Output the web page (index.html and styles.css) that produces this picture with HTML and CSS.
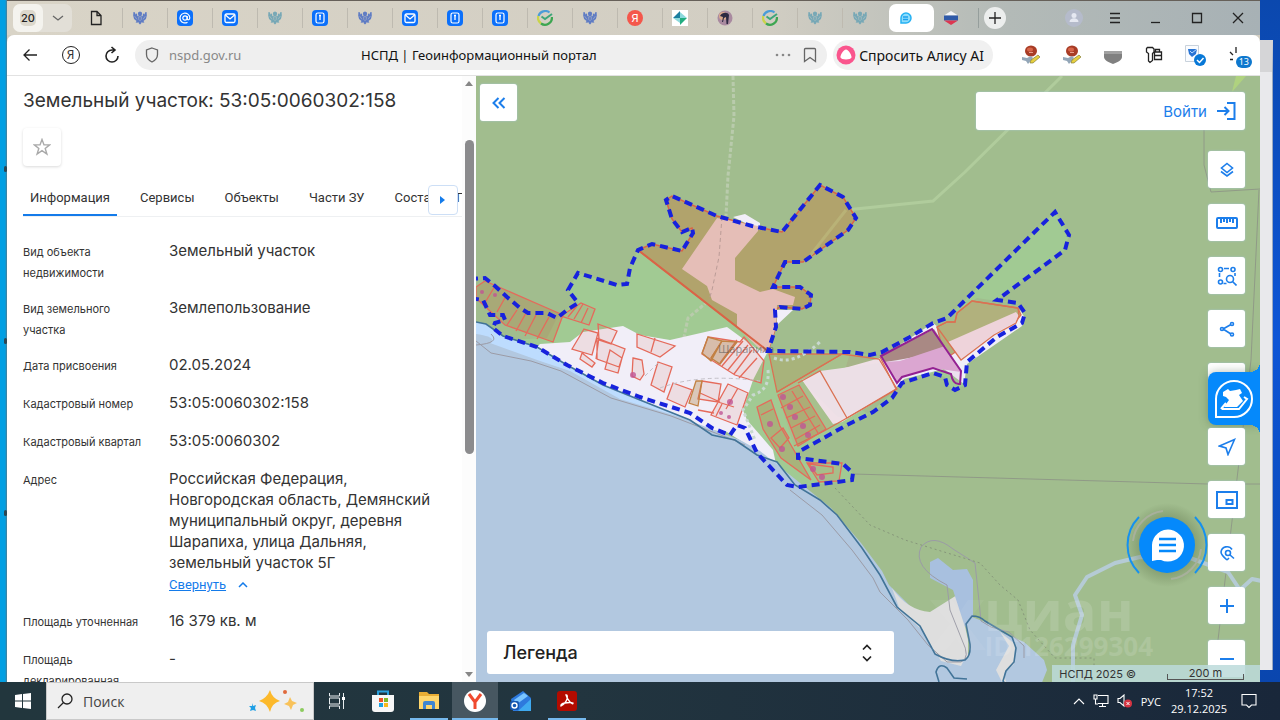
FILE: index.html
```html
<!DOCTYPE html>
<html lang="ru">

<head>
    <meta charset="UTF-8">
    <meta name="viewport" content="width=device-width, initial-scale=1.0">
    <title>НСПД | Геоинформационный портал</title>
    <link rel="stylesheet" href="styles.css">
</head>

<body>
    <!-- shared icons -->
    <svg class="sprite" aria-hidden="true">
        <symbol id="eagle" viewBox="0 0 16 16">
            <path fill="currentColor" d="M6 1.500l2-1 2 1 .5 2-1 1.500 1.500 1 .5-3.500L13 4l1-2.500L15.500 1l.3 4-1 4-2.800 2.500 1 1.500-2 .5-1-.8-.8 1.500L8 15.500l-1.200-1.300L6 12.700l-1 .8L3 13l1-1.500L1.200 9l-1-4 .3-4L2 1.500 3 4l1.500-1.500L5 6l1.500-1-1-1.500z" />
            <path stroke="#d5d1c6" stroke-width=".5" fill="none" d="M2 6l2.500 3.500M14 6l-2.500 3.500M6.500 6.500h3v3L8 11 6.500 9.500z" />
        </symbol>
        <symbol id="mail" viewBox="0 0 16 16">
            <rect width="16" height="16" rx="4" fill="#0b70fb" />
            <rect x="3" y="4" width="10" height="8.500" rx="1.500" fill="none" stroke="#fff" stroke-width="1.300" />
            <path d="M3.500 5l4.500 4 4.500-4" fill="none" stroke="#fff" stroke-width="1.300" />
        </symbol>
        <symbol id="mailat" viewBox="0 0 16 16">
            <rect width="16" height="16" rx="4" fill="#0b70fb" />
            <circle cx="8" cy="8" r="2.200" fill="none" stroke="#fff" stroke-width="1.200" />
            <path d="M10.200 6v2.600c0 1.800 2.600 1.600 2.600-.8A4.900 4.900 0 1 0 10.500 12.200" fill="none" stroke="#fff" stroke-width="1.200" />
        </symbol>
        <symbol id="card" viewBox="0 0 16 16">
            <rect width="16" height="16" rx="4" fill="#0b70fb" />
            <rect x="4" y="3" width="8" height="10" rx="1.800" fill="none" stroke="#fff" stroke-width="1.200" />
            <path d="M7 5.500h2M8 5.500v4.500" stroke="#fff" stroke-width="1.300" />
        </symbol>
        <symbol id="sber" viewBox="0 0 16 16">
            <path d="M12.500 2.500A7 7 0 0 0 1.500 6" fill="none" stroke="#4a9cd8" stroke-width="2.200" />
            <path d="M1.300 6A7 7 0 0 0 4 13.500" fill="none" stroke="#c9d44a" stroke-width="2.200" />
            <path d="M4 13.500A7 7 0 0 0 14.900 7" fill="none" stroke="#3da651" stroke-width="2.200" />
            <path d="M4.500 6.500L8 9l7-5" fill="none" stroke="#3da67a" stroke-width="2" />
        </symbol>
        <symbol id="tools" viewBox="0 0 20 20">
            <ellipse cx="10" cy="6" rx="6" ry="5.500" fill="#a83c25" />
            <ellipse cx="9" cy="4.500" rx="3" ry="2" fill="#d8654a" />
            <path d="M8 7h4v1H8z" fill="#e8a08c" />
            <path d="M1 12l5 1 4-2 2 2-5 6-2-3-4-1z" fill="#93a6b8" />
            <path d="M9 18l1-3 7-5 2 2-7 6z" fill="#e6cf3f" stroke="#76702c" stroke-width=".6" />
        </symbol>
    </svg>

    <div class="desktop">
        <div class="desktop-left">
            <span></span><span></span><span></span>
        </div>

        <div class="browser">
            <!-- tab strip -->
            <header class="tabbar">
                <div class="tab-group">
                    <button class="tab-count"><span>20</span></button>
                    <button class="tab-more" aria-label="Список вкладок">
                        <svg width="12" height="12" viewBox="0 0 12 12"><path d="M1 4l5 4 5-4" class="line grey" /></svg>
                    </button>
                </div>
                <button class="doc-tab" aria-label="Документ">
                    <svg width="12" height="16" viewBox="0 0 12 16"><path d="M1.500 1.500h5.500l4 4v9h-9.500zM7 1.500v4h4" class="line" /></svg>
                </button>
                <nav class="tabs" aria-label="Вкладки">
                    <button class="tab eagle-blue"><svg><use href="#eagle" /></svg></button>
                    <button class="tab"><svg><use href="#mailat" /></svg></button>
                    <button class="tab"><svg><use href="#mail" /></svg></button>
                    <button class="tab eagle-teal"><svg><use href="#eagle" /></svg></button>
                    <button class="tab"><svg><use href="#card" /></svg></button>
                    <button class="tab eagle-blue"><svg><use href="#eagle" /></svg></button>
                    <button class="tab"><svg><use href="#mail" /></svg></button>
                    <button class="tab"><svg><use href="#card" /></svg></button>
                    <button class="tab"><svg><use href="#card" /></svg></button>
                    <button class="tab"><svg><use href="#sber" /></svg></button>
                    <button class="tab eagle-blue"><svg><use href="#eagle" /></svg></button>
                    <button class="tab"><span class="ya">Я</span></button>
                    <button class="tab">
                        <svg viewBox="0 0 16 16"><rect width="16" height="16" fill="#fff" /><path d="M8 1v7H1z" fill="#1c7fa0" /><path d="M1 8h7v5z" fill="#8bd9dc" /><path d="M8 2l7 6H8z" fill="#8bd9dc" /><path d="M8 8h7l-7 7z" fill="#22ad80" /></svg>
                    </button>
                    <button class="tab">
                        <svg viewBox="0 0 16 16"><circle cx="8" cy="8" r="7.500" fill="#a98aa0" /><circle cx="6" cy="6" r="4" fill="#dba98d" /><path d="M3 6c2-4 8-4 9-1l-1 9H9.500L9 7 7 8l-1 4H5l1-5z" fill="#2d2942" /></svg>
                    </button>
                    <button class="tab"><svg><use href="#sber" /></svg></button>
                    <button class="tab eagle-teal"><svg><use href="#eagle" /></svg></button>
                    <button class="tab eagle-teal"><svg><use href="#eagle" /></svg></button>
                </nav>
                <button class="tab active" aria-label="НСПД">
                    <svg viewBox="0 0 16 16"><path d="M3 13V8a5 5 0 1 1 5 5z" fill="#8edcfb" stroke="#25b1f3" stroke-width="1.500" /><path d="M5 7h5M5 9.500h5" stroke="#1ba1ef" stroke-width="1.500" /></svg>
                </button>
                <button class="tab flag-tab" aria-label="Госуслуги">
                    <svg viewBox="0 0 16 16"><path d="M1 5.500L8 1l7 4.500z" fill="#f5f6f8" /><path d="M1 5.500h14v5H1z" fill="#2f5aa8" /><path d="M1 10.500h14L8 15z" fill="#dd3650" /></svg>
                </button>
                <button class="new-tab" aria-label="Новая вкладка">
                    <svg width="12" height="12" viewBox="0 0 12 12"><path d="M6 0v12M0 6h12" class="line" /></svg>
                </button>
                <div class="window-buttons">
                    <button aria-label="Профиль">
                        <svg width="18" height="18" viewBox="0 0 18 18"><circle cx="9" cy="9" r="9" fill="#b5bbcb" /><circle cx="9" cy="6.500" r="2.500" fill="#e5e8f1" /><path d="M4.500 13c0-5 9-5 9 0z" fill="#e5e8f1" /></svg>
                    </button>
                    <button aria-label="Меню"><svg width="12" height="12" viewBox="0 0 12 12"><path d="M1 1.500h10M1 6h10M1 10.500h10" class="line" /></svg></button>
                    <button aria-label="Свернуть"><svg width="12" height="12" viewBox="0 0 12 12"><path d="M1 10.500h9" class="line" /></svg></button>
                    <button aria-label="Развернуть"><svg width="12" height="12" viewBox="0 0 12 12"><path d="M1.500 1.500h9v9h-9z" class="line" /></svg></button>
                    <button aria-label="Закрыть"><svg width="12" height="12" viewBox="0 0 12 12"><path d="M1 1l10 10M11 1L1 11" class="line" /></svg></button>
                </div>
            </header>

            <!-- address bar -->
            <div class="toolbar">
                <button class="nav-btn" aria-label="Назад"><svg width="16" height="16" viewBox="0 0 16 16"><path d="M15 8H2M7.500 2.500L2 8l5.500 5.500" class="line" /></svg></button>
                <button class="nav-btn" aria-label="Яндекс"><span class="ya-ring">Я</span></button>
                <button class="nav-btn" aria-label="Обновить"><svg width="16" height="18" viewBox="0 0 16 18"><path d="M10.500 4H8a6 6 0 1 0 6 6M7.500 1l3.500 3-3.500 3" class="line thick" /></svg></button>
                <div class="address">
                    <svg width="14" height="16" viewBox="0 0 14 16"><path d="M7 1l5.500 2v4.500c0 3.500-2.500 6-5.500 7.500-3-1.500-5.500-4-5.500-7.500V3z" class="line grey" /></svg>
                    <input class="url" type="text" value="nspd.gov.ru" aria-label="Адрес">
                    <span class="page-title">НСПД | Геоинформационный портал</span>
                    <button class="more" aria-label="Ещё">
                        <svg width="16" height="4" viewBox="0 0 16 4"><g fill="#888"><circle cx="2" cy="2" r="1.300" /><circle cx="8" cy="2" r="1.300" /><circle cx="14" cy="2" r="1.300" /></g></svg>
                    </button>
                    <button aria-label="В закладки">
                        <svg width="14" height="16" viewBox="0 0 14 16"><path d="M1.500 2.500a1 1 0 0 1 1-1h9a1 1 0 0 1 1 1v12L7 10.500l-5.500 4z" class="line grey" /></svg>
                    </button>
                </div>
                <button class="alice">
                    <svg width="20" height="20" viewBox="0 0 20 20"><circle cx="10" cy="10" r="9.500" fill="#fa558d" /><path d="M10 4.500c2.500 0 6 6 5.500 8-.5 2.500-10.500 2.500-11 0C4 10.500 7.500 4.500 10 4.500z" fill="#fff" /></svg>
                    Спросить Алису AI
                </button>
                <div class="extensions">
                    <button aria-label="Расширение"><svg width="20" height="20"><use href="#tools" /></svg></button>
                    <button aria-label="Расширение"><svg width="20" height="20"><use href="#tools" /></svg></button>
                    <button aria-label="Щит"><svg width="20" height="20" viewBox="0 0 20 20"><path d="M1 6h18v3H1z" fill="#a1a1a1" /><path d="M1 9h18v3c0 3-4 5-9 7-5-2-9-4-9-7z" fill="#808080" /></svg></button>
                    <button aria-label="Пароли"><svg width="18" height="18" viewBox="0 0 18 18"><path d="M1.500 2.500l1-1h5l1.500 1.500v3L7.500 7.500v7L5 16.500 3.500 15V7.500l-2-1.500zM10.500 6V3.500h4V6M9.500 6h7v7.500h-7zM9.500 9.500h7" class="line" /></svg></button>
                    <button aria-label="Подпись"><svg width="22" height="22" viewBox="0 0 22 22"><path d="M1.500 1.500h13v16h-13z" fill="#fafcff" stroke="#c9d2dc" /><path d="M4 5h9l-1 5-4 3-3-3z" fill="#2874d4" /><path d="M6 7l2 2 5-4" stroke="#b9daff" fill="none" /><circle cx="16" cy="16" r="6" fill="#0878d7" /><path d="M13 16l2.500 2.500L19.500 14" fill="none" stroke="#fff" stroke-width="1.500" /></svg></button>
                    <button class="downloads" aria-label="Загрузки">
                        <svg width="18" height="18" viewBox="0 0 18 18"><path d="M9 1v6M3 6l3 3M3 13.500h3" class="line" /></svg>
                        <span class="badge">13</span>
                    </button>
                </div>
            </div>

            <main class="portal">
                <!-- land parcel card -->
                <section class="panel">
                    <div class="panel-body">
                        <h1>Земельный участок: 53:05:0060302:158</h1>
                        <button class="favorite" aria-label="В избранное">
                            <svg width="18" height="18" viewBox="0 0 18 18"><path d="M9 1.500l2 5.400h5.700l-4.500 3.500 1.700 5.700L9 12.700l-4.900 3.400 1.700-5.700L1.300 6.900H7z" fill="none" stroke="#a9a9a9" stroke-width="1.400" /></svg>
                        </button>
                        <div class="info-tabs" role="tablist">
                            <button class="info-tab selected" role="tab">Информация</button>
                            <button class="info-tab" role="tab">Сервисы</button>
                            <button class="info-tab" role="tab">Объекты</button>
                            <button class="info-tab" role="tab">Части ЗУ</button>
                            <button class="info-tab" role="tab">Состав ЕЗП</button>
                            <button class="tabs-next" aria-label="Далее">
                                <svg width="6" height="8" viewBox="0 0 6 8"><path d="M0 0l5 4-5 4z" fill="#147bea" /></svg>
                            </button>
                        </div>
                        <dl class="details">
                            <div><dt>Вид объекта недвижимости</dt><dd>Земельный участок</dd></div>
                            <div><dt>Вид земельного участка</dt><dd>Землепользование</dd></div>
                            <div><dt>Дата присвоения</dt><dd>02.05.2024</dd></div>
                            <div><dt>Кадастровый номер</dt><dd>53:05:0060302:158</dd></div>
                            <div><dt>Кадастровый квартал</dt><dd>53:05:0060302</dd></div>
                            <div>
                                <dt>Адрес</dt>
                                <dd>Российская Федерация, Новгородская область, Демянский муниципальный округ, деревня Шарапиха, улица Дальняя, земельный участок 5Г
                                    <a class="collapse" href="#"><span>Свернуть</span><svg width="10" height="6" viewBox="0 0 10 6"><path d="M1 5l4-4 4 4" fill="none" stroke="#147bea" stroke-width="1.500" /></svg></a>
                                </dd>
                            </div>
                            <div><dt>Площадь уточненная</dt><dd>16 379 кв. м</dd></div>
                            <div><dt>Площадь декларированная</dt><dd>-</dd></div>
                        </dl>
                    </div>
                    <div class="scrollbar">
                        <i class="arrow-up"></i>
                        <div class="track"><div class="thumb"></div></div>
                        <i class="arrow-down"></i>
                    </div>
                </section>

                <!-- map -->
                <section class="map">
                    <svg class="map-canvas" viewBox="476 76 784 606" preserveAspectRatio="xMinYMin slice">
                        <defs>
                            <path id="border" d="M470 279L485 278 495 286 507 297 520 308 528 313 547 313 557 318 567 310 578 303 568 290 578 273 617 285 627 284 630 268 638 250 652 244 682 251 693 233 692 228 682 232 672 219 666 200 672 196 717 216 752 226 782 232 820 185 843 197 856 218 848 230 803 262 785 262 773 287 800 287 811 295 810 305 802 309 780 307 775 310 776 327 768 351 850 352 870 355 882 352 910 337 933 323 947 318 1055 212 1069 235 1065 250 997 300 1018 303 1025 313 1022 323 997 337 967 362 965 385 955 390 947 385 945 377 933 373 902 383 892 398 873 412 847 425 820 440 798 452 798 458 843 464 853 473 852 480 798 487 787 485 757 453 745 428 737 425 730 435 712 428 690 413 640 397 603 383 567 365 537 347 503 336 493 328 495 323 505 320 503 315 490 315 483 300 470 298" />
                        </defs>
                        <rect x="476" y="76" width="900" height="700" fill="#a1bd8e" />
                        <use href="#border" fill="#a1ca93" />
                        <path fill="#a1bd8e" d="M476 278l9 0 10 8 25 22 8 5h19l10 5-10 20-40 2-20-8-6-12-5-20z" />
                        <path fill="#a1bd8e" d="M850 353l20 3 63-33 14-5 30-20 20 3 25 3 3 20-55 40-5 20-20-15-30 5-47 40-30-20z" />

                        <!-- roads and field tracks -->
                        <path d="M805 262L846 210 933 201 965 172 1062 76" fill="none" stroke="#b0cc9c" stroke-width="3" />
                        <path d="M1236 76h10l-14 16z" fill="#afd27f" />
                        <path d="M733 76l1 40-6 60-2 40M712 298l-24 20-5 24" fill="none" stroke="#b9cbac" stroke-width="3" stroke-dasharray="4 2" />

                        <!-- village -->
                        <path fill="#f1eef8" d="M540 344l30-2 13-10 40-6 17 9 30 5 57-13 30 22 10 4-14 27-10 30 4 10 26 30 3 14-24-16-25-16-40-5-60-30-70-22-30-18z" />
                        <path fill="#f1eef8" d="M802 380l78-22 53-35 27 22 60-35 5 8-3 8-55 38-3 20-20-15-40 10-12 13-50 30-9 2z" />

                        <!-- lake -->
                        <path fill="#b9d5f5" d="M476 322l10 2 17 12 34 11 30 18 36 20 37 15 50 20 22 15 23 5 22 15 20 7 18 23 25 15 17 15 25 33 18 27 17 32 23 19 15 28 20 7 15-4V700H476z" />
                        <path fill="#bddcfe" d="M476 322l10 2 17 12 34 11 30 18 36 20 37 15 50 20 22 15v6l-60-18-100-38-76-25z" />
                        <path fill="#b2c8e0" d="M476 334q22 3 14 9l50 18 30 10 50 28 60 18 60 23 20 11 40 32 31 25 30 35 21 28 7 14 28 28 20 25 19 17 12 4 18-5 20-20 18 8 20 18 3 10-10 25 8 20H476z" />
                        <path fill="#b2c8e0" d="M935 654l20 7 13-1 2-15-4-20 6-8 13 5 25 15 6 11-2 17-10 7 2 14H900z" />
                        <path fill="#dedede" d="M892 588q15 22 38 24l27-17 5 18 6 27 0 18q-15 5-32-4l-14-24-22-20z" />
                        <path fill="#a8c0df" d="M930 562l8-4 15 12 14-1 6 11v37l-8 10-12-37-23-12z" />
                        <path fill="#dedede" d="M1000 632l15 12-1 20-10 9 2 9h-4l-6-12 13-24zM938 656l25 6-2 4-20-5z" />
                        <g fill="none" stroke="#9b9ba6" stroke-width="1">
                            <path d="M476 345q25-2 15-11M476 341l15 12 40 8 30 10 50 27 60 18 60 23 14 6M790 490l32 25 30 35 21 28 7 14 28 28 20 25 19 17h14q10-4 1-22l-12-30-3-25q-35-18-26-38 12-14 32 2l22 14 4 38 2 20 10 6 18 5 15 14v12" />
                            <path d="M853 474l355 10h52M1204 130v35l7 27 49-3M1259 190l-8 170-33 280" stroke="#909a87" />
                            <path d="M835 488l35 37 35 15 75 23 20 22 18 15 12 30 25 28h39v8" stroke="#86967a" stroke-dasharray="2 3" />
                        </g>
                        <path d="M476 322l10 2 17 12 34 11 30 18 36 20 37 15 50 20 22 15 23 5 22 15 20 7 18 23 25 15 17 15 25 33 18 27 17 32 23 19 15 28q16 9 30 6 6-4 5-16l-4-20 6-8q8 0 13 5l27 16 4 11-2 14-8 9-3 10 6 8M939 682l-3-10q3-10 11-4l7 10 13 1" fill="none" stroke="#427498" stroke-width="1.600" />
                        <path d="M1073 682v-37l9-30-7-20 12-18 28-14 25-6 50 1 38 14 12 18 12-11 10 2" fill="none" stroke="#b5cbd5" stroke-width="4" stroke-linejoin="round" />

                        <!-- large parcel -->
                        <path fill="#b1a36c" stroke="#da6447" stroke-width="1.500" d="M638 250L652 244 682 251 693 233 692 228 682 232 672 219 666 200 672 196 717 216 752 226 782 232 820 185 843 197 856 218 848 230 803 262 785 262 773 287 800 287 811 295 810 305 802 309 780 307 775 310 776 327 768 351z" />
                        <path fill="#f1eef8" d="M733 217l12-3 15 9v7zM777 310h16l-16 15z" />
                        <path fill="#e5beb7" d="M717 218l41 8v5l-23 27v22l25 12 13-3 22 8-2 8-16 0-1 22-8 25-5 0-26-25v-13l-25-14-5-14-25-17z" />
                        <path d="M638 250l130 101" stroke="#da6447" stroke-width="2" />
                        <path d="M722 217l-3 40-7 33-3 10" fill="none" stroke="#bb9c97" stroke-dasharray="4 3" />
                        <path d="M805 262L846 210" stroke="#b9b277" stroke-width="3" />

                        <!-- eastern parcels -->
                        <g fill="rgba(222,110,90,.1)" stroke="#da7253" stroke-width="1.300">
                            <path d="M769 354h73l-65 38z" fill="rgba(190,110,50,.25)" />
                            <path d="M777 392l65-38 37 5 18 30-50 29-23 13-30 15M820 371l27 47" />
                            <path fill="#ecdfe6" stroke="none" d="M802 380l18-9 60-8 16 26-49 28-9 0z" />
                            <path d="M847 418l-27-47-22 12M880 357l16 32-49 29" fill="none" />
                            <path fill="#b1b17d" d="M937 327l10-5h8l2-9 15-12 46 7 3 7-4 5-51 25-21 14z" />
                            <path fill="#eed3da" stroke="none" d="M948 342l68-30 3 4-3 6-22 12-33 25z" />
                            <path fill="none" d="M937 327l10-5h8l2-9 15-12 46 7 1 8-3 7-22 12-33 25z" />
                        </g>
                        <path d="M881 356l53-27 14 22-50 9-13 2z" fill="#a98f83" />
                        <path d="M885 362l15-1 45-15 16 26-28-4-30 9-6 5z" fill="#dfaed6" />
                        <path d="M881 356l51-27 29 42-1 13q-7 1-9-10l-18-6-31 9-5 6z" fill="rgba(180,80,150,.08)" stroke="#932192" stroke-width="2" />

                        <!-- village parcels -->
                        <g fill="rgba(214,96,78,.12)" stroke="#e56a5b" stroke-width="1.300">
                            <path d="M476 287l9-6 78 34-10 27-48-17-29-27zM495 286l-9 15M506 296l-9 16M517 310l-10 15M526 313l-10 18M536 315l-11 21M549 317l-12 22" fill="rgba(190,110,50,.25)" />
                            <path d="M561 316l20-13 14 6-6 16zM577 306l-9 11M583 304l-9 15M588 308l-7 15" />
                            <path d="M584 329l14 4-6 22-20-6zM598 324l19 7-6 13-12-4zM597 338l28 11-6 18-22-8zM582 353l13 10-3 4-12-8zM599 337l-3 22M610 350l12 8-4 15-13-4z" />
                            <path d="M637 334l38 12-15 11-23-10zM655 338l-4 14M633 358l9 2 2 14-4 6-8-4zM658 362l14 5-8 25-13-7z" />
                            <path d="M708 337l32 5 4-5 20 24-3 22-26-8-33-21zM722 341l-11 17M737 340l-17 23M743 341l-21 25M748 345l-20 25M752 350l-18 24M757 358l-18 20" />
                            <path d="M673 383l19 7-7 17-18-8zM702 381l19 3-3 18-20-3zM728 384l20 9-11 32-26-10zM738 388l-12 21M718 402l16 5M700 393l20 9M722 404l-6 12M698 410l16 3" />
                            <path d="M696 381h6l-4 25-9-3z" fill="rgba(175,130,70,.35)" stroke="#c28243" />
                            <path d="M708 337l14 4-11 20-9-8zM722 341l15 1-17 22-9-6z" fill="rgba(175,130,70,.35)" stroke="#c28243" />
                            <path d="M757 407l14-7 9 26 31 54-30-22-18-29zM761 415l12-6M771 438l12-10 6 10-9 10z" fill="rgba(190,110,50,.25)" />
                            <path d="M778 395l21-10 27 44-28 17zM792 391l26 42M781 408l22-12M786 418l24-11M791 428l24-12M796 439l24-14" fill="rgba(190,110,50,.25)" />
                            <path d="M809 464l24 3v6l-16 2zM842 463l-3 18-20 1-12-19z" />
                        </g>
                        <g fill="#c15594" opacity=".8">
                            <circle cx="783" cy="397" r="3" /><circle cx="790" cy="407" r="3" /><circle cx="795" cy="417" r="3" /><circle cx="803" cy="426" r="3" /><circle cx="770" cy="424" r="3" /><circle cx="808" cy="435" r="3" /><circle cx="782" cy="449" r="3" /><circle cx="813" cy="469" r="3" /><circle cx="822" cy="477" r="3" /><circle cx="633" cy="375" r="3" /><circle cx="730" cy="402" r="3" /><circle cx="721" cy="413" r="2" /><circle cx="729" cy="417" r="2" /><circle cx="495" cy="295" r="2" /><circle cx="482" cy="292" r="2" />
                        </g>
                        <path d="M774 358q20 8 46-16M768 370q2 20-15 25l-10 15 12 30" fill="none" stroke="#c9d8d0" stroke-width="3" stroke-dasharray="3 3" />
                        <path d="M645 376l15-15M660 388q40-15 100-7" fill="none" stroke="#c4c1c8" stroke-dasharray="4 3" />
                        <text x="718" y="353" class="village-name">Шарапиха</text>
                        <use href="#border" fill="none" stroke="#1722dd" stroke-width="4" stroke-dasharray="8 5" />

                        <g class="watermark">
                            <text x="984" y="631" class="mark-big">циан</text>
                            <text x="1153" y="656" class="mark-id" text-anchor="end">ID 126299304</text>
                            <path opacity=".4" d="M930 600h22l8 12 8-12h16l-18 24 20 26h-22l-8-12-10 12h-16l20-26z" />
                        </g>
                    </svg>

                    <button class="map-btn collapse-panel" aria-label="Скрыть панель">
                        <svg width="14" height="12" viewBox="0 0 14 12"><path d="M6.500 1l-5 5 5 5M12.500 1l-5 5 5 5" class="blue-line thick" /></svg>
                    </button>
                    <div class="login"><a href="#">Войти <svg width="20" height="20" viewBox="0 0 20 20"><path d="M1 10h11M8.500 6l4 4-4 4M11 2h7.500v16H11" class="blue-line thick" /></svg></a></div>

                    <div class="map-tools upper">
                        <button class="map-btn" aria-label="Слои"><svg width="16" height="16" viewBox="0 0 16 16"><path d="M8 1.500l5.500 4.500L8 10.500 2.500 6zM2 9.500l6 4.500 6-4.500" class="blue-line" /></svg></button>
                        <button class="map-btn" aria-label="Линейка"><svg width="22" height="12" viewBox="0 0 22 12"><path d="M2 1h18q1 0 1 1v8q0 1-1 1H2q-1 0-1-1V2q0-1 1-1zM5 1v5M8 1v4M11 1v5M14 1v4M17 1v5" class="blue-line thick" /></svg></button>
                        <button class="map-btn" aria-label="Выделение"><svg width="20" height="20" viewBox="0 0 20 20"><g class="blue-line"><circle cx="3.500" cy="3.500" r="2" /><circle cx="16" cy="3.500" r="2" /><circle cx="3.500" cy="16" r="2" /><path d="M7 2.500h5M2.500 7v4M18 7v3M6.500 17.500h3M15.500 15.500l4 4" /><circle cx="13" cy="13" r="3.500" /></g></svg></button>
                        <button class="map-btn" aria-label="Поделиться"><svg width="16" height="16" viewBox="0 0 16 16"><g class="blue-line"><path d="M4 8l8-4.500M4 8l8 5" /><circle cx="3" cy="8" r="1.500" /><circle cx="13" cy="3" r="1.500" /><circle cx="13" cy="13.500" r="1.500" /></g></svg></button>
                        <button class="map-btn" aria-label="Печать"><svg width="14" height="14" viewBox="0 0 14 14"><path d="M2 1h10v8H2z" class="blue-line" /></svg></button>
                    </div>
                    <button class="promo" aria-label="Помощник">
                        <svg width="40" height="40" viewBox="0 0 40 40"><path d="M2 38V20A18 18 0 1 1 20 38z" fill="none" stroke="#fff" stroke-width="2" /><path d="M9 13l5-3 2 2 6-1 4-1 2 4-3 2 4 6-6 6H10l5-7-3-3-3-1z" fill="#fff" /><path d="M8 30h17l8-10-3-2M12 24l-5 6" fill="none" stroke="#fff" stroke-width="2" /></svg>
                    </button>
                    <div class="map-tools lower">
                        <button class="map-btn" aria-label="Моё местоположение"><svg width="18" height="18" viewBox="0 0 18 18"><path d="M16.500 1.500L10 16.500 8 10 1.500 8z" class="blue-line" /></svg></button>
                        <button class="map-btn" aria-label="Миникарта"><svg width="22" height="18" viewBox="0 0 22 18"><path d="M1 1h20v16H1zM10.500 9h6v4h-6z" class="blue-line thick" /></svg></button>
                        <button class="map-btn" aria-label="Поиск на карте"><svg width="16" height="16" viewBox="0 0 16 16"><g class="blue-line"><path d="M8 15C4.500 12 2 9.500 2 7a6 6 0 0 1 11-2.500M8 15l2-2" /><circle cx="9" cy="8" r="2.500" /><path d="M11 10l4 3.500" /></g></svg></button>
                        <button class="map-btn" aria-label="Приблизить"><svg width="14" height="14" viewBox="0 0 14 14"><path d="M7 0v14M0 7h14" class="blue-line thick" /></svg></button>
                        <button class="map-btn" aria-label="Отдалить"><svg width="14" height="14" viewBox="0 0 14 14"><path d="M0 7h14" class="blue-line thick" /></svg></button>
                    </div>

                    <button class="chat" aria-label="Чат">
                        <svg width="84" height="84" viewBox="0 0 84 84">
                            <path d="M14 14a40 40 0 0 0 0 56M70 14a40 40 0 0 1 0 56" fill="none" stroke="#1591ef" stroke-width="2" />
                            <path d="M8 38A34 34 0 0 1 38 8M76 46a34 34 0 0 1-30 30" fill="none" stroke="#a8b09c" stroke-width="2" />
                            <circle cx="42" cy="42" r="28" fill="#0589fb" />
                            <path d="M27 58V42a16 16 0 1 1 9 15l-4 0z" fill="#fff" />
                            <path d="M34 36h17M34 42h17M34 48h17" stroke="#0589fb" stroke-width="2.500" />
                        </svg>
                    </button>

                    <button class="legend">
                        <span>Легенда</span>
                        <svg width="10" height="18" viewBox="0 0 10 18"><path d="M1 5.500l4-4 4 4M1 12.500l4 4 4-4" fill="none" stroke="#222" stroke-width="1.700" /></svg>
                    </button>
                    <div class="attribution"><span>НСПД 2025 ©</span><span class="scale">200 m</span></div>
                </section>
            </main>
        </div>

        <div class="desktop-right"><div class="back-window"></div></div>
    </div>

    <!-- windows taskbar -->
    <footer class="taskbar">
        <button class="start" aria-label="Пуск">
            <svg width="16" height="16" viewBox="0 0 16 16"><path d="M0 2l7-1v6.500H0zM8 1l8-1v7.500H8zM0 8.500h7V15l-7-1zM8 8.500h8V16l-8-1z" fill="#fff" /></svg>
        </button>
        <label class="search">
            <svg width="16" height="16" viewBox="0 0 16 16"><circle cx="10" cy="6" r="5" class="line" /><path d="M6.500 9.500L1 15" class="line" /></svg>
            <input type="text" placeholder="Поиск" aria-label="Поиск">
            <svg width="60" height="26" viewBox="0 0 60 26"><path d="M23 2q2 8 10 11-8 2-10 11-3-9-11-11 8-3 11-11z" fill="#fcb92b" /><path d="M43 9l2 4 5 2-4 2-2 5-2-4-5-2 4-2z" fill="#f8c25a" /><path d="M5 15l1 3 3-1-1 3 1 3-3-1-3 1 1-3-2-2 3 0z" fill="#1f9fe5" /><circle cx="38" cy="4" r="2" fill="#e0693c" /><circle cx="55" cy="22" r="2" fill="#8ccb5e" /></svg>
        </label>
        <button class="app" aria-label="Представление задач"><svg width="18" height="16" viewBox="0 0 18 16"><path d="M1.500 0v3h10V0M1.500 5h10v6h-10zM1.500 16v-3h10v3M15.500 0v16" fill="none" stroke="#e8edef" /><path d="M14 4h3v3h-3z" fill="#fff" /></svg></button>
        <button class="app" aria-label="Магазин"><svg width="22" height="22" viewBox="0 0 22 22"><path d="M6 5V1.500h10V5" fill="none" stroke="#2aa0dd" stroke-width="2" /><path d="M0 5h22v14q0 3-3 3H3q-3 0-3-3z" fill="#f7f7f7" /><path d="M7 8h4v4H7z" fill="#ef5328" /><path d="M12 8h4v4h-4z" fill="#80b929" /><path d="M7 13h4v4H7z" fill="#1aa2e4" /><path d="M12 13h4v4h-4z" fill="#f8b91c" /></svg></button>
        <button class="app open" aria-label="Проводник"><svg width="22" height="18" viewBox="0 0 22 18"><path d="M1 0h8l2 2h10v15H1z" fill="#e9ad34" /><path d="M1 4h20v13H1z" fill="#ffd66c" /><path d="M5 17v-6q0-2 2-2h8q2 0 2 2v6h-3v-4H8v4z" fill="#3f86d2" /></svg></button>
        <button class="app open current" aria-label="Яндекс Браузер"><svg width="24" height="24" viewBox="0 0 24 24"><circle cx="12" cy="12" r="11" fill="#fff" /><path d="M6 5l6 8v7M18 5l-6 8" fill="none" stroke="#f04a2f" stroke-width="3" /></svg></button>
        <button class="app" aria-label="Outlook"><svg width="22" height="22" viewBox="0 0 22 22"><path d="M1 9L13 1l8 7v13H3z" fill="#2d79dd" /><path d="M4 10l10-7 4 3-11 8z" fill="#7ac4ff" /><path d="M8 21l13-12v12z" fill="#3faaf0" /><rect y="11" width="9" height="9" rx="2" fill="#1557b0" /><circle cx="4.500" cy="15.500" r="2.500" fill="none" stroke="#fff" stroke-width="1.400" /></svg></button>
        <button class="app open" aria-label="Acrobat"><svg width="20" height="20" viewBox="0 0 20 20"><rect width="20" height="20" rx="3" fill="#b30b00" /><path d="M9 4q2 0 1 4t-6 7q-1-2 4-3t8 0q0 2-3-1T9 4z" fill="none" stroke="#fff" stroke-width="1.300" /></svg></button>
        <div class="tray">
            <svg width="12" height="8" viewBox="0 0 12 8"><path d="M1 7l5-5 5 5" class="tray-line" /></svg>
            <svg width="16" height="14" viewBox="0 0 16 14"><path d="M5 1.500h10v8H5M9.500 9.500v3M6 12.500h7M1 1h3v4H1zM2.500 5v5H5" class="tray-line" /></svg>
            <svg width="16" height="14" viewBox="0 0 16 14"><path d="M1 4.500h2l4-3.500v11L3 8.500H1z" class="tray-line" /><circle cx="11" cy="9.500" r="4" fill="#d63442" /><path d="M9.500 8l3 3M12.500 8l-3 3" stroke="#fff" /></svg>
            <span class="lang">РУС</span>
            <time>17:52<br>29.12.2025</time>
            <svg width="16" height="16" viewBox="0 0 16 16"><path d="M1 1.500h14v10.500h-4.500L8 14.500 5.500 12H1z" class="tray-line" /></svg>
        </div>
    </footer>
</body>

</html>
```

FILE: styles.css
```css
* {
    padding: 0;
    margin: 0;
    box-sizing: border-box;
}

html,
body {
    height: 100%;
}

body {
    display: flex;
    flex-direction: column;
    overflow: hidden;
    font-family: Inter, "Liberation Sans", sans-serif;
    color: #333;
}

button {
    border: none;
    background: none;
    font: inherit;
    color: inherit;
    display: flex;
    align-items: center;
    justify-content: center;
}

input {
    border: none;
    background: none;
    font: inherit;
    outline: none;
    min-width: 0;
}

svg {
    flex-shrink: 0;
}

.sprite {
    display: none;
}

.line {
    fill: none;
    stroke: #222;
    stroke-width: 1.3;
}

.line.grey {
    stroke: #666;
}

.line.thick {
    stroke-width: 1.6;
}

.desktop {
    flex: 1;
    min-height: 0;
    display: flex;
    background: #0d4cc4;
}

.desktop-left {
    width: 7px;
    background: linear-gradient(90deg, #019fe3 5px, #4c7d93);
    display: flex;
    flex-direction: column;
    justify-content: space-evenly;
    align-items: flex-end;
}

.desktop-left span {
    width: 3px;
    height: 6px;
    border-radius: 3px;
    background: #2c4652;
}

.desktop-right {
    width: 20px;
    padding: 40px 7px 12px 0;
    background: linear-gradient(#0b48ae, #0d55d6 50%, #0a46ae);
}

.back-window {
    height: 100%;
    background: #e9e9ec;
    border-top: 32px solid #d5d5d7;
    border-right: 1px solid #9aa8c0;
}

.browser {
    flex: 1;
    min-width: 0;
    display: flex;
    flex-direction: column;
    background: #d2cec3;
}

/* tab strip */
.tabbar {
    height: 35px;
    display: flex;
    align-items: center;
    padding-left: 6px;
    border-top: 1px solid #666059;
    background: linear-gradient(90deg, #d9d4c7, #d2cec3 60%, #b3bab7 80%, #a7b1b5);
}

.tab-group {
    display: flex;
    width: 59px;
    height: 28px;
    border-radius: 7px;
    background: #e2dfd7;
}

.tab-count {
    width: 30px;
    border-radius: 7px;
    background: #f4f3ee;
    font-size: 11px;
    font-weight: 500;
    color: #222;
}

.tab-count span {
    background: #dcd8cc;
    border-radius: 5px;
    padding: 1px;
}

.tab-more {
    flex: 1;
}

.doc-tab {
    width: 50px;
    padding-right: 3px;
}

.tabs {
    display: flex;
}

.tab {
    width: 45px;
    height: 20px;
    padding-left: 9px;
    justify-content: flex-start;
    border-left: 1px solid #bebab0;
}

.tab svg {
    width: 16px;
    height: 16px;
}

.tab.eagle-blue svg,
.tab.eagle-teal svg {
    height: 14px;
}

.eagle-blue {
    color: #5f7cc4;
}

.eagle-teal {
    color: #77a8b6;
}

.ya {
    width: 16px;
    height: 16px;
    border-radius: 8px;
    background: #f4574b;
    color: #fff;
    font-size: 11px;
    line-height: 16px;
}

.tab.active {
    height: 28px;
    margin-left: 2px;
    border: none;
    border-radius: 7px;
    background: #fff;
}

.tab.flag-tab {
    border-left: none;
    border-right: 1px solid #959e9c;
}

.new-tab {
    width: 22px;
    height: 22px;
    margin-left: 5px;
    border-radius: 11px;
    background: #eceeed;
}

.window-buttons {
    display: flex;
    margin-left: auto;
    padding-right: 2px;
}

.window-buttons button {
    width: 41px;
    height: 28px;
}

/* address bar */
.toolbar {
    height: 41px;
    display: flex;
    align-items: center;
    padding: 0 4px 0 2px;
    border-radius: 7px 7px 0 0;
    border-bottom: 1px solid #e2e2e2;
    background: #fff;
    font-family: "Noto Sans", sans-serif;
    font-size: 13px;
}

.nav-btn {
    width: 41px;
}

.ya-ring {
    width: 18px;
    height: 18px;
    border: 1px solid #222;
    border-radius: 9px;
    font-size: 12px;
    line-height: 16px;
}

.address {
    flex: 1;
    height: 30px;
    display: flex;
    align-items: center;
    gap: 10px;
    margin-left: 3px;
    padding: 0 10px;
    border-radius: 15px;
    background: #efefef;
}

.url {
    width: 182px;
    color: #888;
}

.page-title {
    flex: 1;
    color: #111;
    white-space: nowrap;
}

.address .more {
    margin-right: 2px;
}

.alice {
    height: 30px;
    margin-left: 6px;
    padding: 0 9px 0 3px;
    gap: 3px;
    border-radius: 15px;
    background: #f0f0f0;
    color: #111;
    font-size: 14px;
    white-space: nowrap;
}

.extensions {
    display: flex;
    margin-left: 17px;
}

.extensions button {
    position: relative;
    width: 41px;
    height: 30px;
}

.badge {
    position: absolute;
    right: 4px;
    bottom: 2px;
    padding: 0 3px;
    border-radius: 6px;
    background: #0e78ce;
    color: #fff;
    font-size: 9px;
    line-height: 12px;
}

.portal {
    flex: 1;
    min-height: 0;
    display: flex;
}

/* parcel card */
.panel {
    width: 469px;
    flex-shrink: 0;
    display: flex;
    background: #fff;
}

.panel-body {
    flex: 1;
    min-width: 0;
    overflow: hidden;
    padding: 13px 0 0 16px;
}

.panel h1 {
    font-size: 19px;
    line-height: 24px;
    font-weight: 400;
    white-space: nowrap;
}

.favorite {
    width: 38px;
    height: 38px;
    margin-top: 15px;
    border-radius: 4px;
    box-shadow: 0 1px 3px rgba(0, 0, 0, .15);
}

.info-tabs {
    position: relative;
    display: flex;
    height: 39px;
    margin-top: 12px;
    overflow: hidden;
    border-bottom: 1px solid #eef0f2;
    font-family: Roboto, sans-serif;
    font-size: 13px;
}

.info-tab {
    padding: 0 7px;
    margin-right: 16px;
    white-space: nowrap;
}

.info-tab.selected {
    border-bottom: 2px solid #147bea;
    border-top: 2px solid transparent;
}

.tabs-next {
    position: absolute;
    right: 4px;
    top: 7px;
    width: 30px;
    height: 30px;
    border: 1px solid #cddff6;
    border-radius: 4px;
    background: #fff;
}

.details {
    display: flex;
    flex-direction: column;
    gap: 13px;
    padding-top: 23px;
}

.details div {
    display: grid;
    grid-template-columns: 146px 265px;
    align-items: baseline;
}

.details dt {
    padding-right: 24px;
    font-size: 11px;
    line-height: 21px;
}

.details dd {
    min-height: 25px;
    font-size: 15px;
    line-height: 21px;
}

.collapse {
    display: flex;
    align-items: center;
    gap: 12px;
    font-family: Roboto, sans-serif;
    font-size: 13px;
    line-height: 24px;
    color: #147bea;
    text-decoration: none;
}

.collapse span {
    text-decoration: underline;
}

.scrollbar {
    width: 14px;
    display: flex;
    flex-direction: column;
    align-items: center;
    padding: 5px 0;
    background: #fcfcfc;
}

.scrollbar i {
    border: 4px solid transparent;
}

.arrow-up {
    border-top: none !important;
    border-bottom: 5px solid #868686 !important;
}

.arrow-down {
    border-bottom: none !important;
    border-top: 5px solid #868686 !important;
}

.track {
    flex: 1;
    padding-top: 54px;
}

.thumb {
    width: 9px;
    height: 59%;
    border-radius: 5px;
    background: #8b8b8d;
}

/* map */
.map {
    position: relative;
    flex: 1;
    min-width: 0;
    overflow: hidden;
    background: #a1bd8e;
}

.map-canvas {
    display: block;
    width: 100%;
    height: 100%;
}

.village-name {
    font: 11px "Open Sans", sans-serif;
    fill: #555;
    opacity: .6;
}

.watermark {
    fill: #fff;
    opacity: .13;
    font-family: "Open Sans", sans-serif;
    font-weight: 700;
}

.mark-big {
    font-size: 56px;
}

.mark-id {
    font-size: 26px;
}

.blue-line {
    fill: none;
    stroke: #1c7eeb;
    stroke-width: 1.6;
}

.blue-line.thick {
    stroke-width: 2;
}

.map-btn {
    width: 37px;
    height: 37px;
    border-radius: 3px;
    background: #fff;
    box-shadow: 0 0 2px #a9c9dd;
}

.collapse-panel {
    position: absolute;
    left: 4px;
    top: 8px;
}

.login {
    position: absolute;
    top: 16px;
    right: 15px;
    width: 269px;
    height: 38px;
    display: flex;
    align-items: center;
    justify-content: flex-end;
    padding-right: 9px;
    border-radius: 3px;
    background: #fff;
    box-shadow: 0 0 2px #a9c9dd;
}

.login a {
    display: flex;
    align-items: center;
    gap: 9px;
    font-size: 15px;
    color: #1c7eeb;
    text-decoration: none;
}

.map-tools {
    position: absolute;
    right: 15px;
    display: flex;
    flex-direction: column;
    gap: 16px;
}

.map-tools.upper {
    top: 75px;
}

.map-tools.lower {
    top: 352px;
}

.promo {
    position: absolute;
    right: 0;
    top: 296px;
    width: 52px;
    height: 53px;
    border-radius: 8px 0 0 8px;
    background: #0589fb;
    box-shadow: 0 0 10px rgba(60, 90, 60, .4);
}

.promo::before,
.promo::after {
    content: "";
    position: absolute;
    right: 0;
    width: 10px;
    height: 10px;
}

.promo::before {
    top: -10px;
    background: radial-gradient(circle at 0 0, transparent 10px, #0589fb 10px);
}

.promo::after {
    bottom: -10px;
    background: radial-gradient(circle at 0 100%, transparent 10px, #0589fb 10px);
}

.chat {
    position: absolute;
    right: 51px;
    top: 427px;
    border-radius: 42px;
    background: radial-gradient(circle, rgba(80, 100, 60, .3) 28px, transparent 42px);
}

.legend {
    position: absolute;
    left: 11px;
    bottom: 8px;
    width: 407px;
    height: 43px;
    justify-content: space-between;
    padding: 0 22px 0 16px;
    border-radius: 3px;
    background: #fff;
    color: #222;
    font-size: 18px;
    font-weight: 500;
}

.attribution {
    position: absolute;
    right: 0;
    bottom: 0;
    height: 17px;
    display: flex;
    align-items: center;
    gap: 31px;
    padding: 0 16px 0 7px;
    background: rgba(188, 219, 218, .85);
    color: #333;
    font-size: 11px;
}

.scale {
    width: 77px;
    height: 12px;
    text-align: center;
    background: linear-gradient(#555, #555) left bottom / 1px 5px no-repeat, linear-gradient(#555, #555) right bottom / 1px 5px no-repeat;
    border-bottom: 1px solid #555;
    line-height: 11px;
}

/* taskbar */
.taskbar {
    height: 38px;
    display: flex;
    background: linear-gradient(90deg, #22363d, #22353f 45%, #19273a);
    color: #fff;
    font-family: "Open Sans", sans-serif;
}

.start {
    width: 46px;
}

.search {
    width: 268px;
    display: flex;
    align-items: center;
    gap: 10px;
    padding: 0 6px 0 10px;
    border: 1px solid #c9c9c9;
    background: #efefef;
    font-size: 14px;
}

.search input {
    flex: 1;
}

.search input::placeholder {
    color: #444;
}

.app {
    width: 46px;
}

.app.open {
    border-bottom: 2px solid #76b9ed;
    border-top: 2px solid transparent;
    width: 38px;
    margin: 0 4px;
}

.app.open.current {
    width: 46px;
    margin: 0;
    background: #475761;
}

.tray {
    display: flex;
    align-items: center;
    gap: 8px;
    margin-left: auto;
    padding-right: 23px;
    font-size: 11px;
}

.tray time {
    width: 60px;
    text-align: center;
    line-height: 16px;
    white-space: nowrap;
    margin-right: 4px;
}

.tray-line {
    fill: none;
    stroke: #fff;
    stroke-width: 1.1;
}
```
